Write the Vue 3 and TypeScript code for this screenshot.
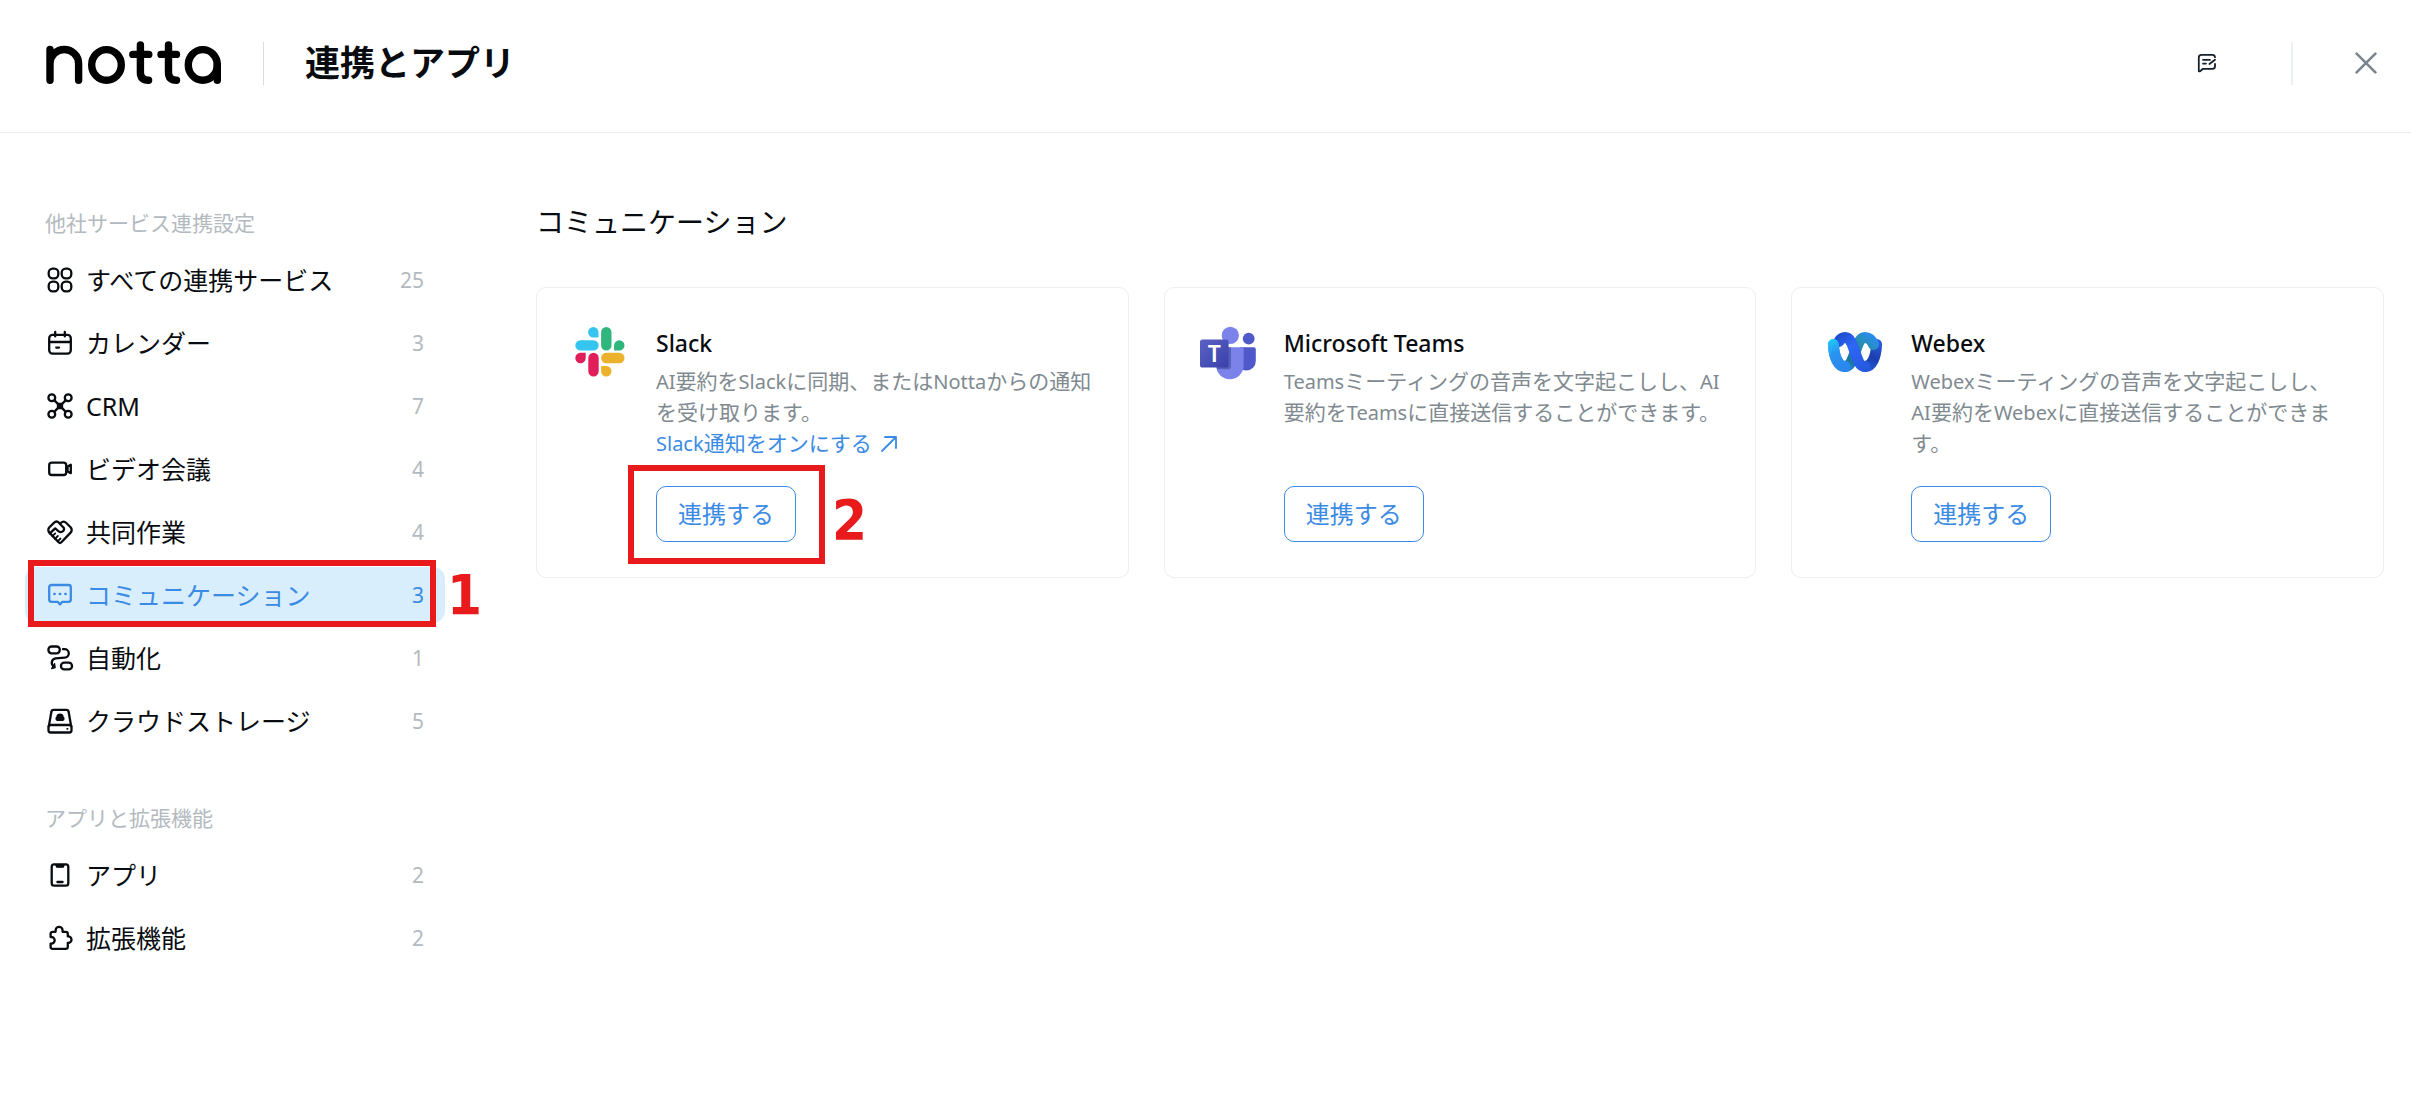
<script setup lang="ts">
interface NavItem {
  id: string
  label: string
  count: number
  active?: boolean
}
interface NavGroup {
  title: string
  items: NavItem[]
}
interface Service {
  id: string
  name: string
  lines: string[]
  link?: string
  marked?: boolean
}

const groups: NavGroup[] = [
  {
    title: '他社サービス連携設定',
    items: [
      { id: 'all', label: 'すべての連携サービス', count: 25 },
      { id: 'calendar', label: 'カレンダー', count: 3 },
      { id: 'crm', label: 'CRM', count: 7 },
      { id: 'video', label: 'ビデオ会議', count: 4 },
      { id: 'collab', label: '共同作業', count: 4 },
      { id: 'chat', label: 'コミュニケーション', count: 3, active: true },
      { id: 'automation', label: '自動化', count: 1 },
      { id: 'storage', label: 'クラウドストレージ', count: 5 },
    ],
  },
  {
    title: 'アプリと拡張機能',
    items: [
      { id: 'apps', label: 'アプリ', count: 2 },
      { id: 'extensions', label: '拡張機能', count: 2 },
    ],
  },
]

const services: Service[] = [
  {
    id: 'slack',
    name: 'Slack',
    lines: ['AI要約をSlackに同期、またはNottaからの通知', 'を受け取ります。'],
    link: 'Slack通知をオンにする',
    marked: true,
  },
  {
    id: 'teams',
    name: 'Microsoft Teams',
    lines: ['Teamsミーティングの音声を文字起こしし、AI', '要約をTeamsに直接送信することができます。'],
  },
  {
    id: 'webex',
    name: 'Webex',
    lines: ['Webexミーティングの音声を文字起こしし、', 'AI要約をWebexに直接送信することができま', 'す。'],
  },
]

// Splits mixed text so that Latin words can be set slightly smaller than the kana around them.
const runs = (text: string) =>
  text
    .split(/([A-Za-z]+)/)
    .filter((t) => t !== '')
    .map((t) => ({ text: t, latin: /^[A-Za-z]/.test(t) }))
</script>

<template>
  <div class="page">
    <header class="header">
      <a class="logo" href="#home" aria-label="notta">
        <svg width="176" height="44" viewBox="0 0 176 44" fill="none" stroke="#000" stroke-width="7.4" stroke-linecap="round" stroke-linejoin="round">
          <path d="M4 8.5V39.2M4 22.5a14.3 14 0 0 1 28.6 0V39.2" />
          <ellipse cx="60.5" cy="23.9" rx="14.8" ry="15.3" />
          <path d="M94.4 4V31.5q0 7.7 8.2 7.7M86.8 13.4h16" />
          <path d="M122.5 4V31.5q0 7.7 8 7.7M115 13.4h15.5" />
          <ellipse cx="156.8" cy="23.9" rx="14.5" ry="15.3" />
          <path d="M171.3 24V39.2" />
        </svg>
      </a>
      <span class="rule rule-thin"></span>
      <h1 class="title">連携とアプリ</h1>
      <div class="tools">
        <button class="tool" type="button" aria-label="フィードバック">
          <svg width="20" height="20" viewBox="0 0 20 20" fill="none" stroke="#16202a" stroke-width="1.8" stroke-linecap="round" stroke-linejoin="round">
            <path d="M18 4.2a2.6 2.6 0 0 0-2.6-2.4H4.4A2.6 2.6 0 0 0 1.8 4.4V18.2q.8.4 1.6-.2L6 15.8h9.4a2.6 2.6 0 0 0 2.6-2.6V11" />
            <path d="M6 6.8h7M6 10.6h3M12.4 11l5.6-4.2" />
          </svg>
        </button>
        <span class="rule rule-thick"></span>
        <button class="tool" type="button" aria-label="閉じる">
          <svg width="22" height="22" viewBox="0 0 22 22" fill="none" stroke="#7a858e" stroke-width="2.6" stroke-linecap="round">
            <path d="M1.6 1.6l18.8 18.8M20.4 1.6L1.6 20.4" />
          </svg>
        </button>
      </div>
    </header>

    <div class="body">
      <nav class="sidebar">
        <section v-for="group in groups" :key="group.title" class="group">
          <h2 class="group-title">{{ group.title }}</h2>
          <ul class="list">
            <li v-for="item in group.items" :key="item.id" class="entry">
              <a class="row" :class="{ active: item.active }" :href="'#' + item.id">
                <svg class="icon" width="28" height="28" viewBox="0 0 28 28" fill="none" stroke="currentColor" stroke-width="2.3" stroke-linecap="round" stroke-linejoin="round" aria-hidden="true">
                  <g v-if="item.id === 'all'">
                    <rect x="2.7" y="2.7" width="9.6" height="9.6" rx="4" />
                    <rect x="15.7" y="2.7" width="9.6" height="9.6" rx="4" />
                    <rect x="2.7" y="15.7" width="9.6" height="9.6" rx="4" />
                    <rect x="15.7" y="15.7" width="9.6" height="9.6" rx="4" />
                  </g>
                  <g v-else-if="item.id === 'calendar'">
                    <rect x="3.2" y="5.8" width="21.6" height="18.8" rx="3.4" />
                    <path d="M9.2 3v4.4M18.8 3v4.4M3.2 13h21.6M10.2 18.6h2.8" />
                  </g>
                  <g v-else-if="item.id === 'crm'">
                    <circle cx="5.8" cy="5.8" r="3.4" />
                    <circle cx="22.2" cy="5.8" r="3.4" />
                    <circle cx="5.8" cy="22.2" r="3.4" />
                    <circle cx="22.2" cy="22.2" r="3.4" />
                    <path d="M8.4 8.4l11.2 11.2M19.6 8.4L8.4 19.6" />
                    <rect x="12" y="12" width="4" height="4" fill="currentColor" />
                  </g>
                  <g v-else-if="item.id === 'video'">
                    <rect x="3.2" y="7.6" width="17" height="12.4" rx="2.6" />
                    <path d="M21.6 11.6l3.2-1.8v8.4l-3.2-1.8z" />
                  </g>
                  <g v-else-if="item.id === 'collab'">
                    <path d="M14 5.6l-.9-.8a3.8 3.8 0 0 0-5.200 0L3.400 9.200a3.900 3.900 0 0 0 0 5.400L12.600 24.300a2 2 0 0 0 2.800 0L24.600 14.600a3.900 3.900 0 0 0 0-5.400L20.100 4.800a3.800 3.800 0 0 0-5.200 0z" />
                    <path d="M3.800 15.400L9.200 10.400l3 2.600a3.500 3.500 0 0 0 5 0 2.500 2.500 0 0 0 0-3.800L14 6" />
                    <path stroke-width="1.9" d="M6.400 18.200l2.800-2.800M9 20.800l2.800-2.800M11.800 23.400l2.600-2.800" />
                  </g>
                  <g v-else-if="item.id === 'chat'">
                    <path d="M5.4 4h17.2a2.2 2.2 0 0 1 2.2 2.2v12.4a2.2 2.2 0 0 1-2.2 2.2H16.4L14 23.4l-2.4-2.6H5.4a2.2 2.2 0 0 1-2.2-2.2V6.2A2.2 2.2 0 0 1 5.4 4z" />
                    <path d="M8.2 13h.6M13.7 13h.6M19.2 13h.6" />
                  </g>
                  <g v-else-if="item.id === 'automation'">
                    <rect x="2.4" y="2.5" width="11.4" height="6.8" rx="3.2" />
                    <rect x="15" y="18.6" width="11" height="6.8" rx="3.2" />
                    <path d="M17 5.2h1.400a4.200 4.200 0 0 1 .4 8.400L9.600 14.400a4.400 4.400 0 0 0-2.400 7.600" />
                    <path d="M8.600 19.600l.6 4-3.600 1z" fill="currentColor" stroke-width="1.200" />
                  </g>
                  <g v-else-if="item.id === 'storage'">
                    <path d="M2.8 19.4L5.4 4.800a2.200 2.200 0 0 1 2.200-1.900h12.800a2.200 2.200 0 0 1 2.200 1.900l2.600 14.600" />
                    <rect x="2.5" y="18" width="23" height="7.5" rx="2.2" />
                    <path d="M11 13.200a1.700 1.700 0 0 1 0-3 3 3 0 0 1 6 0 1.700 1.700 0 0 1 0 3z" fill="currentColor" stroke-width="1.400" />
                    <path d="M21.2 21.800h.4" stroke-width="1.800" />
                  </g>
                  <g v-else-if="item.id === 'apps'">
                    <rect x="5.7" y="3.3" width="16.6" height="21.4" rx="2.4" />
                    <path d="M9.600 3.600h8.800l-1.200 2.600h-6.400z" fill="currentColor" stroke-width="1.200" />
                    <path d="M11.400 21h5.200" />
                  </g>
                  <g v-else>
                    <path d="M6.600 7.800H9.600V6.400a3.500 3.500 0 0 1 7 0V7.800H19.800a2 2 0 0 1 2 2V12.400h.4a3.300 3.300 0 0 1 0 6.600h-.4V22.800a2 2 0 0 1-2 2H6.600a2 2 0 0 1-2-2V19.600H5.400a3.200 3.200 0 0 0 0-6.600H4.600V9.800a2 2 0 0 1 2-2z" />
                  </g>
                </svg>
                <span class="row-label">{{ item.label }}</span>
                <span class="row-count">{{ item.count }}</span>
              </a>
              <template v-if="item.active">
                <span class="frame frame-row"></span>
                <span class="step step-row">1</span>
              </template>
            </li>
          </ul>
        </section>
      </nav>

      <main class="main">
        <h2 class="heading">コミュニケーション</h2>
        <div class="cards">
          <article v-for="service in services" :key="service.id" class="card">
            <svg v-if="service.id === 'slack'" class="brand" width="56" height="56" viewBox="0 0 56 56" aria-hidden="true">
              <path fill="#36c5f0" d="M21.300 3a5.200 5.200 0 0 0 0 10.400h5.200V8.200A5.200 5.200 0 0 0 21.300 3zM8.500 16.200h13a5.200 5.200 0 0 1 0 10.400h-13a5.200 5.200 0 0 1 0-10.400z" />
              <path fill="#2eb67d" d="M52.500 21.400a5.200 5.200 0 0 0-10.400 0v5.200h5.200a5.200 5.200 0 0 0 5.200-5.200zM39.500 8.200a5.200 5.200 0 0 0-10.400 0v13.200a5.200 5.200 0 0 0 10.400 0z" />
              <path fill="#ecb22e" d="M34.300 52.400a5.200 5.200 0 0 0 0-10.400h-5.200v5.200a5.200 5.200 0 0 0 5.200 5.200zM34.300 39.200a5.200 5.200 0 0 1 0-10.400h13a5.200 5.200 0 0 1 0 10.400z" />
              <path fill="#e01e5a" d="M3.300 34a5.200 5.200 0 0 0 10.400 0v-5.200H8.500A5.200 5.200 0 0 0 3.300 34zM16.300 34a5.200 5.200 0 0 1 10.400 0v13.200a5.200 5.200 0 0 1-10.400 0z" />
            </svg>
            <svg v-else-if="service.id === 'teams'" class="brand" width="56" height="56" viewBox="0 0 56 56" aria-hidden="true">
              <defs>
                <linearGradient id="teams-tile" x1="0" y1="0" x2="1" y2="1">
                  <stop offset="0" stop-color="#5a62c3" />
                  <stop offset="1" stop-color="#3940ab" />
                </linearGradient>
              </defs>
              <circle cx="48.700" cy="14.600" r="5.900" fill="#5059c9" />
              <path fill="#5059c9" d="M40 23.200h13.800a2 2 0 0 1 2 2V37a9.500 9.500 0 0 1-9.500 9.500A9 9 0 0 1 40 44z" />
              <circle cx="30.300" cy="11.400" r="8.600" fill="#7b83eb" />
              <path fill="#7b83eb" d="M17.600 23.200h24a2 2 0 0 1 2 2V41.500a13.700 13.700 0 0 1-27.400 0V25.200z" />
              <path fill="#30357f" opacity=".45" d="M16.600 23.200h14.400v19.400a2.600 2.600 0 0 1-2.600 2.600H17z" />
              <rect x="0" y="15.500" width="28.600" height="28" rx="2.600" fill="url(#teams-tile)" />
              <text x="14.300" y="37.500" text-anchor="middle" fill="#fff" class="teams-letter">T</text>
            </svg>
            <svg v-else class="brand" width="56" height="56" viewBox="0 0 56 56" fill="none" stroke-linecap="round" stroke-linejoin="round" aria-hidden="true">
              <defs>
                <linearGradient id="webex-left" x1="2" y1="12" x2="20" y2="44" gradientUnits="userSpaceOnUse">
                  <stop offset="0" stop-color="#1fd8f7" />
                  <stop offset=".5" stop-color="#2a93f2" />
                  <stop offset="1" stop-color="#2a86ee" />
                </linearGradient>
                <linearGradient id="webex-rise" x1="16" y1="44" x2="42" y2="10" gradientUnits="userSpaceOnUse">
                  <stop offset="0" stop-color="#2a86ee" />
                  <stop offset=".25" stop-color="#17789a" />
                  <stop offset=".7" stop-color="#268fae" />
                  <stop offset="1" stop-color="#2b8bea" />
                </linearGradient>
                <linearGradient id="webex-cross" x1="14" y1="10" x2="42" y2="46" gradientUnits="userSpaceOnUse">
                  <stop offset="0" stop-color="#1f4fd0" />
                  <stop offset=".35" stop-color="#2f66f6" />
                  <stop offset="1" stop-color="#2458dc" />
                </linearGradient>
                <linearGradient id="webex-right" x1="50" y1="16" x2="38" y2="46" gradientUnits="userSpaceOnUse">
                  <stop offset="0" stop-color="#2a5fe0" />
                  <stop offset=".55" stop-color="#1b3fae" />
                  <stop offset="1" stop-color="#2458dc" />
                </linearGradient>
              </defs>
              <g stroke-width="11">
                <path stroke="url(#webex-right)" d="M49.600 20.500C49 33 45 42.600 38 42.600" />
                <path stroke="url(#webex-rise)" d="M18 42.600C28.500 42.600 28 13.600 38 13.600C42 13.600 44.500 16 46.500 20.500" />
                <path stroke="url(#webex-left)" d="M6.400 20.500C7 33 11 42.600 18 42.600" />
                <path stroke="url(#webex-cross)" d="M12 17.500C13.500 15 15.500 13.600 18 13.600C28.500 13.600 27.500 42.600 38 42.600" />
                <path stroke="url(#webex-left)" d="M6.400 20.500C6.700 27 8 33 10.500 37" />
              </g>
            </svg>

            <div class="info">
              <h3 class="name">{{ service.name }}</h3>
              <div class="details">
                <p>
                  <span v-for="line in service.lines" :key="line" class="line"><span v-for="(run, i) in runs(line)" :key="i" :class="{ latin: run.latin }">{{ run.text }}</span></span>
                </p>
                <a v-if="service.link" class="link" href="#slack-notifications">
                  <span class="line"><span v-for="(run, i) in runs(service.link)" :key="i" :class="{ latin: run.latin }">{{ run.text }}</span></span>
                  <svg width="18" height="18" viewBox="0 0 18 18" fill="none" stroke="currentColor" stroke-width="1.800" stroke-linecap="round" stroke-linejoin="round" aria-hidden="true">
                    <path d="M2 16L16 2M5 2h11v11" />
                  </svg>
                </a>
              </div>
              <div class="action">
                <button class="connect" type="button">連携する</button>
                <template v-if="service.marked">
                  <span class="frame frame-button"></span>
                  <span class="step step-button">2</span>
                </template>
              </div>
            </div>
          </article>
        </div>
      </main>
    </div>
  </div>
</template>

<style>
body {
  margin: 0;
  background: #fff;
}
</style>

<style scoped>
.page {
  font-family: "Noto Sans", "Noto Sans CJK JP", sans-serif;
  color: #080c10;
  background: #fff;
}
h1, h2, h3, p, ul {
  margin: 0;
  padding: 0;
  font-weight: 400;
}
a {
  color: inherit;
  text-decoration: none;
}
button {
  font-family: inherit;
  background: none;
  cursor: pointer;
}

.header {
  display: flex;
  align-items: center;
  padding: 41px 30px 47px 46px;
  border-bottom: 1px solid #ebeded;
}
.logo {
  display: flex;
}
.rule {
  height: 43px;
}
.rule-thin {
  width: 1px;
  margin: 0 41px;
  background: #dadcdd;
}
.rule-thick {
  width: 2px;
  background: #edf0f0;
}
.title {
  font-size: 35px;
  line-height: 44px;
  font-weight: 700;
}
.tools {
  display: flex;
  align-items: center;
  gap: 58px;
  margin-left: auto;
}
.tool {
  display: flex;
  align-items: center;
  justify-content: center;
  width: 30px;
  height: 30px;
  padding: 0;
  border: 0;
}
.tool:first-child {
  margin-right: 11px;
}

.body {
  display: flex;
  align-items: flex-start;
  gap: 91px;
  padding: 74px 27px 74px 25px;
}
.sidebar {
  flex: 0 0 420px;
  display: flex;
  flex-direction: column;
  gap: 53px;
}
.group-title {
  padding-left: 20px;
  margin-bottom: 13px;
  font-size: 21px;
  line-height: 32px;
  color: #b3babf;
}
.list {
  display: flex;
  flex-direction: column;
  gap: 7px;
  list-style: none;
}
.entry {
  position: relative;
}
.row {
  display: flex;
  align-items: center;
  height: 56px;
  padding: 0 21px;
  border-radius: 12px;
}
.row-label {
  flex: 1;
  margin-left: 12px;
  font-size: 25px;
  line-height: 32px;
}
.row-count {
  font-size: 21px;
  line-height: 32px;
  color: #b3babf;
}
.row.active {
  background: #d8eefd;
  color: #3b8ae4;
}
.row.active .row-count {
  color: #3b8ae4;
}

.main {
  flex: 1;
  min-width: 0;
}
.heading {
  margin-bottom: 50px;
  font-size: 28px;
  line-height: 30px;
}
.cards {
  display: grid;
  grid-template-columns: repeat(3, minmax(0, 1fr));
  gap: 35px;
}
.card {
  display: flex;
  gap: 28px;
  padding: 36px 24px 35px 35px;
  border: 1px solid #eaefef;
  border-radius: 10px;
}
.brand {
  flex: none;
}
.teams-letter {
  font-family: "Noto Sans", sans-serif;
  font-size: 23px;
  font-weight: 600;
}
.info {
  flex: 1;
  min-width: 0;
}
.name {
  margin-bottom: 4px;
  font-size: 23px;
  line-height: 38px;
  font-weight: 500;
}
.details {
  min-height: 96px;
  margin-bottom: 24px;
  font-size: 21px;
  line-height: 31px;
  color: #7f8a90;
}
.line {
  display: block;
}
.latin {
  font-size: 20px;
  line-height: 20px;
}
.link {
  display: flex;
  align-items: center;
  gap: 8px;
  color: #3b8ae4;
}
.action {
  position: relative;
  width: 140px;
}
.connect {
  display: block;
  width: 100%;
  height: 56px;
  padding: 0;
  border: 1px solid #3b8ae4;
  border-radius: 10px;
  font-size: 24px;
  line-height: 32px;
  color: #3b8ae4;
}

.frame {
  position: absolute;
  border: 6px solid #e81a1c;
  pointer-events: none;
}
.frame-row {
  inset: -7px 9px -4px 3px;
}
.frame-button {
  inset: -21px -29px -22px -28px;
}
.step {
  position: absolute;
  font-family: "DejaVu Sans Condensed", "DejaVu Sans", sans-serif;
  font-size: 56px;
  line-height: 56px;
  font-weight: 700;
  color: #e81a1c;
}
.step-row {
  top: 0;
  left: 422px;
}
.step-button {
  top: 6px;
  left: 176px;
}
</style>
